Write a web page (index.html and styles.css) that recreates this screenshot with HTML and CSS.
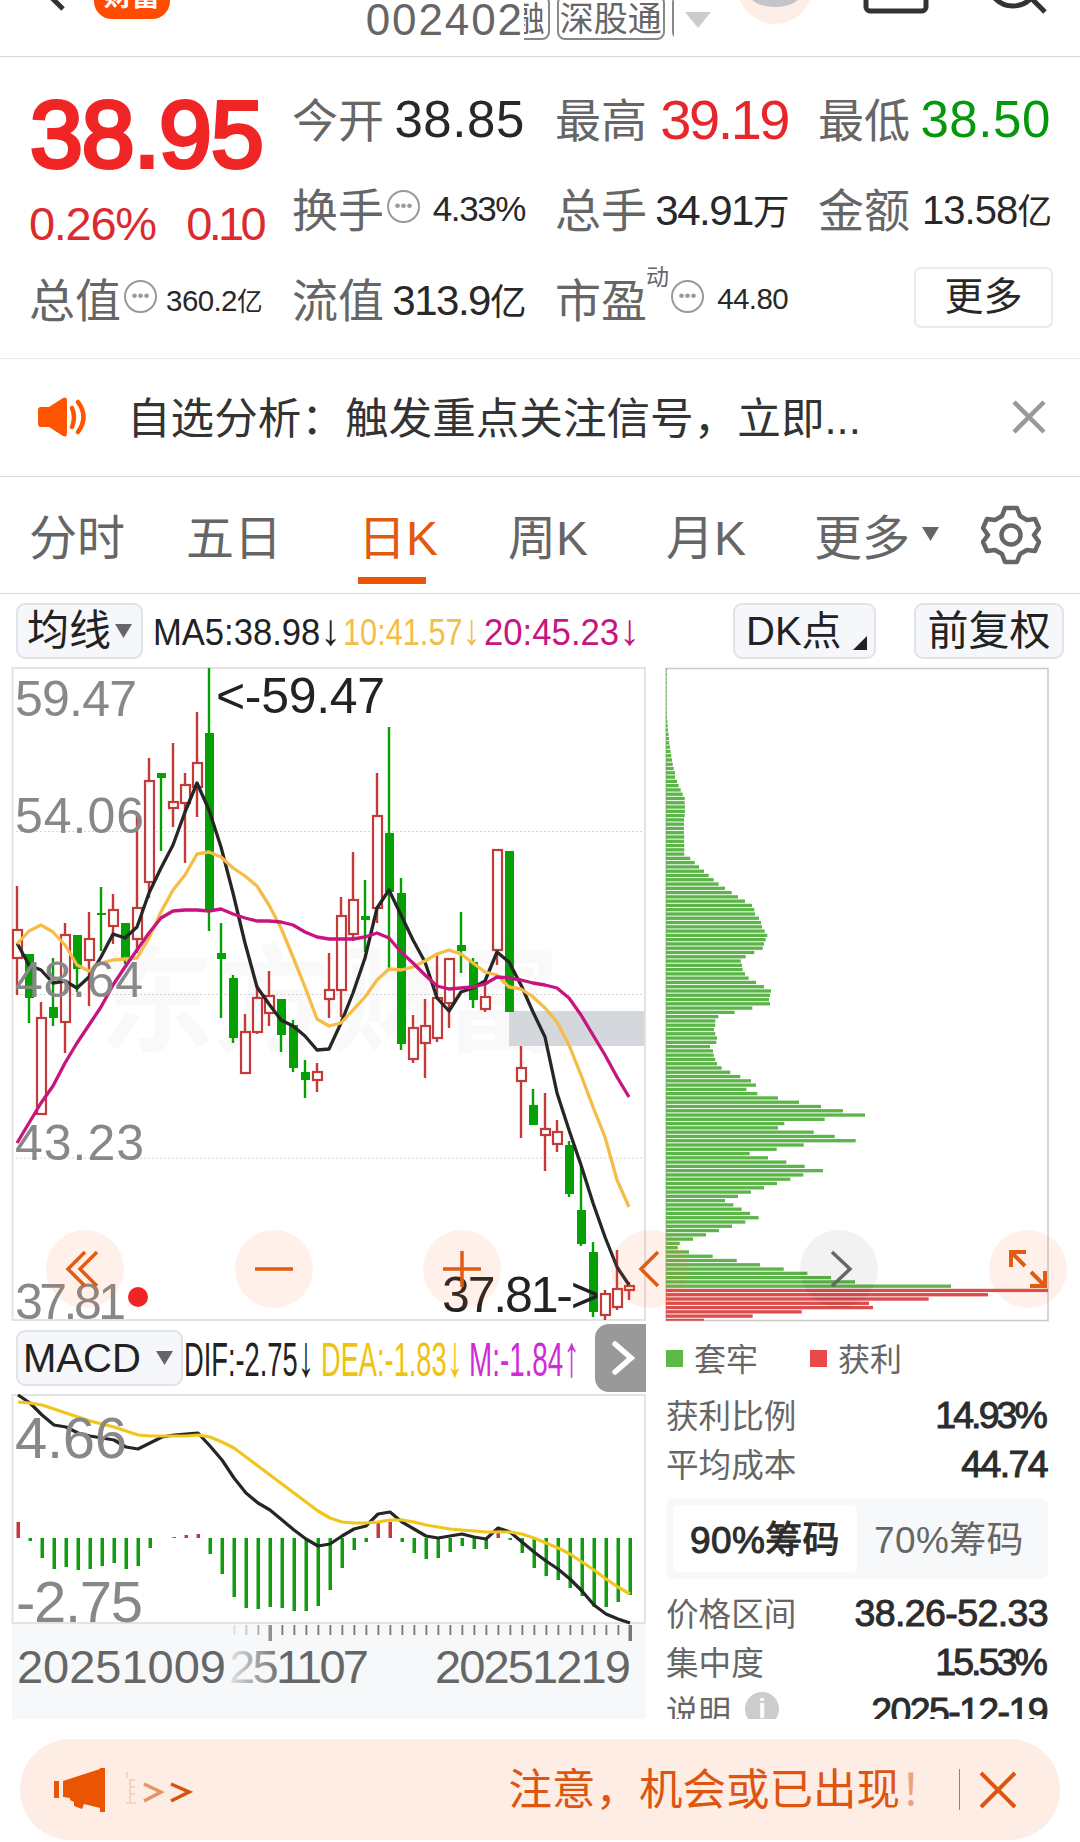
FILE: index.html
```html
<!DOCTYPE html>
<html lang="zh-CN">
<head>
  <meta charset="UTF-8">
  <title>002402</title>
  <link rel="stylesheet" href="styles.css">
</head>
<body>
  <header class="topbar">
    <svg class="back" width="94" height="20" viewBox="0 0 94 20"><path d="M48 -6L63 9" stroke="#333" stroke-width="5" fill="none"/></svg>
    <div class="logo">财富</div>
    <div class="code">002402</div>
    <div class="tags">
      <span class="tag tag-cut">融</span>
      <span class="tag">深股通</span>
      <span class="tag tag-next"></span>
    </div>
    <svg class="caret" width="26" height="16" viewBox="0 0 26 16"><path d="M0 0H26L13 16Z" fill="#ccc"/></svg>
    <svg class="top-icons" width="369" height="30" viewBox="711 0 369 30">
      <circle cx="775" cy="-14" r="38" fill="#ffeee6"/>
      <ellipse cx="775" cy="-5" rx="25" ry="12" fill="#c4c4c9"/>
      <rect x="866" y="-30" width="60" height="41" rx="4" fill="none" stroke="#333" stroke-width="5"/>
      <circle cx="1013" cy="-19" r="25" fill="none" stroke="#333" stroke-width="5"/>
      <path d="M1030 -3L1045 12" stroke="#333" stroke-width="5"/>
    </svg>
  </header>

  <section class="quote">
    <div class="price-block">
      <div class="price">38.95</div>
      <div class="change"><span>0.26%</span><span class="diff">0.10</span></div>
    </div>
    <div class="cell"><label>今开</label><b>38.85</b></div>
    <div class="cell"><label>最高</label><b class="up">39.19</b></div>
    <div class="cell"><label>最低</label><b class="down">38.50</b></div>
    <div class="cell"><label>换手</label><i class="dots">•••</i><b class="s35">4.33%</b></div>
    <div class="cell"><label>总手</label><b class="s41">34.91<em>万</em></b></div>
    <div class="cell"><label>金额</label><b class="s39">13.58<em>亿</em></b></div>
    <div class="cell"><label>总值</label><i class="dots">•••</i><b class="s29">360.2<em>亿</em></b></div>
    <div class="cell"><label>流值</label><b class="s41">313.9<em>亿</em></b></div>
    <div class="cell"><label>市盈</label><sup>动</sup><i class="dots">•••</i><b class="s29 last">44.80</b></div>
    <div class="cell"><button class="more">更多</button></div>
  </section>

  <section class="notice">
    <svg class="speaker" width="52" height="42" viewBox="0 0 52 42">
      <path d="M4 11H12L26 2Q30 0 30 5V37Q30 42 26 40L12 31H4Q1 31 1 28V14Q1 11 4 11Z" fill="#ff5400"/>
      <path d="M35 12Q39 21 35 31M41 6Q52 21 41 36" stroke="#ff5400" stroke-width="4.500" fill="none" stroke-linecap="round"/>
    </svg>
    <div class="notice-text">自选分析：触发重点关注信号，立即...</div>
    <svg class="close" width="34" height="34" viewBox="0 0 34 34"><path d="M2 2L32 32M32 2L2 32" stroke="#999" stroke-width="4.500"/></svg>
  </section>

  <nav class="tabs">
    <span>分时</span>
    <span>五日</span>
    <span class="active">日K</span>
    <span>周K</span>
    <span>月K</span>
    <span>更多<svg class="tri" width="17" height="14" viewBox="0 0 17 14"><path d="M0 0H17L8.500 14Z" fill="#666"/></svg></span>
    <svg class="gear" width="60" height="60" viewBox="-30 -30 60 60">
      <path fill="none" stroke="#666" stroke-width="4.500" stroke-linejoin="round" d="M-6 -27H6L9 -19L16 -15L24 -16L28 -7L23 0L28 7L24 16L16 15L9 19L6 27H-6L-9 19L-16 15L-24 16L-28 7L-23 0L-28 -7L-24 -16L-16 -15L-9 -19Z"/>
      <circle r="9.500" fill="none" stroke="#666" stroke-width="4.500"/>
    </svg>
  </nav>

  <div class="toolbar">
    <button class="pill pill-ma">均线<svg width="17" height="14" viewBox="0 0 17 14"><path d="M0 0H17L8.500 14Z" fill="#666"/></svg></button>
    <svg class="ma-values" width="500" height="60" viewBox="146 601 500 60">
      <g font-size="36.500">
        <text x="153" y="645" textLength="188" lengthAdjust="spacingAndGlyphs" fill="#222">MA5:38.98<tspan class="arrow">↓</tspan></text>
        <text x="343" y="645" textLength="138" lengthAdjust="spacingAndGlyphs" fill="#f5bd48">10:41.57<tspan class="arrow">↓</tspan></text>
        <text x="484" y="645" textLength="156" lengthAdjust="spacingAndGlyphs" fill="#c7147f">20:45.23<tspan class="arrow">↓</tspan></text>
      </g>
    </svg>
    <button class="pill pill-dk">DK点<svg width="14" height="14" viewBox="0 0 14 14"><path d="M14 0V14H0Z" fill="#222"/></svg></button>
    <button class="pill pill-fq">前复权</button>
  </div>

  <main class="stage">
    <div class="left">
      <svg id="kline" width="660" height="656" viewBox="0 666 660 656">
        <text class="watermark" x="98" y="1042" textLength="462">东方财富</text>
        <rect x="509" y="1011" width="136" height="35" fill="#d4d7dc"/>
        <path d="M12 831.500H645M12 994.500H645M12 1158H645" stroke="#d5d5d5" stroke-width="1" stroke-dasharray="2 2"/>
        <rect x="12.500" y="668" width="632.500" height="652" fill="none" stroke="#e3e3e3" stroke-width="2"/>
        <g id="candles"></g>
        <g id="maLines"></g>
        <g class="axis" font-size="50">
          <text x="15" y="716" textLength="122">59.47</text>
          <text x="15" y="833" textLength="129">54.06</text>
          <text x="15" y="997" textLength="128">48.64</text>
          <text x="15" y="1160" textLength="129">43.23</text>
          <text x="15" y="1319" textLength="111">37.81</text>
        </g>
        <circle cx="138" cy="1297" r="10" fill="#f12424"/>
        <text x="216" y="713" font-size="50" textLength="169" fill="#222">&lt;-59.47</text>
        <text x="442" y="1312" font-size="50" textLength="158" fill="#222">37.81-&gt;</text>
      </svg>

      <div class="macd-head">
        <button class="pill pill-macd">MACD<svg width="17" height="14" viewBox="0 0 17 14"><path d="M0 0H17L8.500 14Z" fill="#666"/></svg></button>
        <svg class="macd-values" width="413" height="60" viewBox="182 1328 413 60">
          <g font-size="49">
            <text x="184" y="1376" textLength="130" lengthAdjust="spacingAndGlyphs" fill="#222">DIF:-2.75<tspan class="arrow">↓</tspan></text>
            <text x="321" y="1376" textLength="142" lengthAdjust="spacingAndGlyphs" fill="#f0c20f">DEA:-1.83<tspan class="arrow">↓</tspan></text>
            <text x="469" y="1376" textLength="111" lengthAdjust="spacingAndGlyphs" fill="#cf2bd6">M:-1.84<tspan class="arrow">↑</tspan></text>
          </g>
        </svg>
        <button class="next"><svg width="24" height="34" viewBox="0 0 24 34"><path d="M4 3L20 17L4 31" stroke="#fff" stroke-width="5.500" fill="none" stroke-linecap="round"/></svg></button>
      </div>

      <svg id="macd" width="660" height="325" viewBox="0 1394 660 325">
        <defs>
          <linearGradient id="fade" gradientUnits="userSpaceOnUse" x1="226" y1="0" x2="284" y2="0">
            <stop offset="0" stop-color="#666" stop-opacity=".1"/>
            <stop offset="1" stop-color="#666"/>
          </linearGradient>
        </defs>
        <rect x="12" y="1624" width="634" height="95" fill="#f7f8fa"/>
        <rect x="12.500" y="1395" width="632.500" height="228" fill="none" stroke="#e3e3e3" stroke-width="2"/>
        <g id="macdBars"></g>
        <g id="macdLines"></g>
        <g id="ticks"></g>
        <g class="axis" font-size="58">
          <text x="15" y="1458" textLength="112">4.66</text>
          <text x="16" y="1622" textLength="127">-2.75</text>
        </g>
        <g font-size="47" fill="#666">
          <text x="17" y="1683" textLength="209">20251009</text>
          <text x="229" y="1683" textLength="140" fill="url(#fade)">251107</text>
          <text x="435" y="1683" textLength="196">20251219</text>
        </g>
      </svg>
    </div>

    <div class="right">
      <svg id="chips" width="420" height="656" viewBox="660 666 420 656">
        <rect x="666" y="668.500" width="382" height="652" fill="none" stroke="#c9c9c9" stroke-width="1.500"/>
        <g id="chipBars"></g>
      </svg>
      <div class="info">
        <div class="legend">
          <span class="sq green"></span><span class="legend-a">套牢</span>
          <span class="sq red"></span><span class="legend-b">获利</span>
        </div>
        <div class="row"><span>获利比例</span><b class="tight">14.93%</b></div>
        <div class="row"><span>平均成本</span><b>44.74</b></div>
        <div class="seg"><span class="on">90%筹码</span><span>70%筹码</span></div>
        <div class="row"><span>价格区间</span><b class="wide">38.26-52.33</b></div>
        <div class="row"><span>集中度</span><b class="tight">15.53%</b></div>
        <div class="row"><span>说明<i class="info-dot">i</i></span><b>2025-12-19</b></div>
      </div>
    </div>

    <!-- floating chart controls -->
    <svg class="controls" width="1080" height="90" viewBox="0 1224 1080 90">
      <g fill="rgba(255,104,40,.1)">
        <circle cx="85" cy="1269" r="39"/>
        <circle cx="274" cy="1269" r="39"/>
        <circle cx="462" cy="1269" r="39"/>
        <circle cx="650" cy="1269" r="39"/>
        <circle cx="1028" cy="1269" r="39"/>
      </g>
      <circle cx="839" cy="1269" r="39" fill="rgba(0,0,0,.05)"/>
      <g fill="none" stroke="#e35a12" stroke-width="3.500">
        <path d="M85 1252L68 1269L85 1286M97 1252L80 1269L97 1286"/>
        <path d="M255 1269H293M443 1269H481M462 1251V1287"/>
        <path d="M658 1252L641 1269L658 1286"/>
        <path d="M1026 1252H1011V1267M1011 1252L1025 1266M1030 1286H1045V1271M1045 1286L1031 1272" stroke-width="4"/>
      </g>
      <path d="M832 1252L850 1269L832 1286" fill="none" stroke="#666" stroke-width="3.500"/>
    </svg>
  </main>

  <footer class="banner">
    <svg class="horn" width="52" height="46" viewBox="54 1767 52 46">
      <path d="M54 1781H59V1798H54ZM63 1781L100 1769V1768H105V1812H100V1808L84 1804L82 1809L74 1806V1802L70 1800V1798L63 1797Z" fill="#ea5504"/>
    </svg>
    <svg class="arrows" width="68" height="36" viewBox="124 1770 68 36">
      <path d="M126 1770V1776M129 1777V1801M129 1778H134M129 1785H134M129 1792H134M125 1801H135" stroke="#f7d3c0" stroke-width="2"/>
      <path d="M143 1782L160 1790L143 1799" fill="none" stroke="#e79468" stroke-width="3.500"/>
      <path d="M170 1782L188 1790L170 1799" fill="none" stroke="#d9530f" stroke-width="3.500"/>
    </svg>
    <div class="banner-text">注意，机会或已出现<span>！</span></div>
    <div class="sep"></div>
    <svg class="banner-close" width="38" height="38" viewBox="0 0 38 38"><path d="M2 2L36 36M36 2L2 36" stroke="#dd5510" stroke-width="4"/></svg>
  </footer>

  <script>
    const RED = '#c43a38';
    const GREEN = '#04a004';

    // [up?, high, body top, body bottom, low] in chart pixels
    const candles = [
      [1,886,930,958,995],[0,954,954,998,1023],[1,1002,1018,1114,1114],[0,958,1007,1018,1026],
      [1,923,935,1022,1053],[0,935,935,969,992],[1,912,939,960,1006],[0,887,913,915,951],
      [1,894,910,926,944],[0,923,923,958,964],[1,813,908,939,953],[1,758,781,882,898],
      [0,773,773,778,851],[1,743,802,808,827],[1,773,785,803,863],[1,712,763,787,817],
      [0,668,733,912,931],[0,923,953,959,1018],[0,975,978,1038,1043],[1,1014,1032,1073,1073],
      [1,985,998,1032,1034],[1,971,996,1013,1026],[0,999,999,1035,1052],[0,1020,1025,1068,1072],
      [0,1060,1072,1080,1098],[1,1063,1072,1080,1092],[1,953,990,999,1018],[1,897,916,990,1017],
      [1,852,900,934,941],[0,880,916,920,952],[1,773,816,908,923],[0,727,833,892,968],
      [0,878,893,1044,1050],[1,1015,1028,1059,1063],[1,999,1026,1043,1078],[1,954,998,1038,1042],
      [1,958,959,1003,1028],[0,912,945,951,973],[0,958,962,1000,1008],[1,982,997,1009,1012],
      [1,850,850,950,965],[0,851,851,1012,1012],[1,1046,1068,1081,1138],[0,1089,1105,1125,1125],
      [1,1093,1129,1135,1171],[1,1120,1132,1144,1152],[0,1141,1145,1194,1197],[0,1167,1210,1244,1246],
      [0,1242,1252,1312,1317],[1,1290,1294,1315,1320],[1,1250,1289,1307,1310],[1,1282,1286,1290,1300]
    ];
    const ma20 = [1143,1123,1103,1086,1063,1043,1025,1007,985,967,950,933,918,911,910,910,911,909,914,918,921,921,922,925,932,937,939,939,939,937,933,938,952,963,975,986,989,988,987,984,977,978,980,983,985,988,998,1015,1035,1055,1077,1097];
    const ma10 = [944,931,925,932,945,965,971,963,960,959,958,938,912,890,875,854,852,857,868,876,886,905,928,957,987,1019,1026,1023,1010,997,980,969,970,967,961,954,950,954,963,972,975,987,989,997,1008,1022,1045,1075,1107,1137,1180,1207];
    const ma5 = [943,965,970,983,981,988,977,957,934,938,927,893,868,845,812,783,810,847,893,943,987,1004,1020,1026,1036,1050,1049,1023,993,958,908,890,915,940,962,998,1011,992,988,981,952,962,985,1012,1037,1093,1130,1165,1203,1237,1267,1285];

    // MACD histogram, negative is below the zero line
    const hist = [16,-3,-20,-31,-29,-32,-31,-28,-25,-31,-28,-10,0,1,3,4,-16,-36,-59,-70,-71,-69,-70,-73,-73,-68,-52,-30,-12,-4,15,16,-4,-15,-21,-20,-14,-8,-11,-11,8,-2,-15,-30,-38,-42,-50,-58,-69,-69,-64,-57];
    const dif = [1395,1403,1415,1425,1427,1433,1436,1438,1440,1447,1449,1443,1437,1435,1434,1433,1446,1460,1478,1493,1503,1510,1520,1530,1539,1546,1544,1536,1529,1526,1514,1512,1522,1529,1536,1538,1536,1534,1537,1539,1528,1532,1542,1552,1561,1569,1579,1591,1605,1614,1619,1623];
    const dea = [1402,1403,1405,1409,1413,1417,1421,1424,1427,1431,1435,1436,1436,1436,1436,1435,1437,1442,1448,1457,1466,1475,1484,1493,1502,1511,1518,1522,1523,1523,1522,1520,1520,1522,1525,1527,1529,1530,1531,1532,1532,1532,1534,1538,1543,1548,1554,1562,1570,1579,1587,1594];

    // chip distribution, bar lengths from top to bottom
    const trapped = [.7,.7,.7,.7,.7,.7,.7,.7,.7,.7,.8,1,1.3,1.7,2,2.6,3,3.3,4,4.6,5.3,6,6.7,7.6,9,9,11,12.7,14.7,16.7,18.7,18.7,19,19,18.7,18,18,18,18,18.3,18,18.3,18.3,18.3,24.3,28.7,33,38,42.7,47.7,52.7,59,65.7,72,79,86,88.3,89,93,95,96,98.7,101.3,99.7,98,96.7,88.3,79.7,74.7,76,76.7,79,82.7,90,98,
      105,104,103,104,86.3,68.7,52.3,49.3,49.3,48,49.3,51,50.3,44,47,47.7,49.3,51,55.7,64.3,74.3,85,90,80.3,91.3,112,133,155,177,199,158.7,118.3,112,147.7,168.7,189.7,137.7,110.7,83.7,102,120.3,138.7,157,137.3,124.3,111,98,85,72,59,67.3,75.7,84,92.7,79.3,66,53,40,27,13.7,11.7,23,46.7,70.7,94,117.7,141.3,165,189,285];
    const profit = [382,322,262.7,203,207,135.7,86.7,38];

    function line(data, x0, color, width) {
      const pts = data.map((y, i) => (x0 + i * 12) + ',' + y).join(' ');
      return `<polyline points="${pts}" fill="none" stroke="${color}" stroke-width="${width}" stroke-linejoin="round"/>`;
    }

    document.getElementById('candles').innerHTML = candles.map(([up, high, top, bottom, low], i) => {
      const x = 17 + i * 12;
      if (up) {
        return `<path d="M${x} ${high}V${top}M${x} ${bottom}V${low}" stroke="${RED}" stroke-width="2.4"/>` +
          `<rect x="${x - 4}" y="${top}" width="9" height="${bottom - top}" fill="#fff" stroke="${RED}" stroke-width="2.2"/>`;
      }
      return `<path d="M${x} ${high}V${low}" stroke="${GREEN}" stroke-width="2.4"/>` +
        `<rect x="${x - 4}" y="${top}" width="9" height="${Math.max(bottom - top, 2)}" fill="${GREEN}"/>`;
    }).join('');

    document.getElementById('maLines').innerHTML =
      line(ma5, 17, '#262626', 3.3) + line(ma10, 17, '#f5bd48', 3.3) + line(ma20, 17, '#c7147f', 3.3);

    document.getElementById('macdBars').innerHTML = hist.map((v, i) =>
      `<rect x="${16.5 + i * 12}" y="${v > 0 ? 1538 - v : 1538}" width="3.5" height="${Math.abs(v)}" fill="${v > 0 ? RED : '#129c12'}"/>`
    ).join('');

    document.getElementById('macdLines').innerHTML =
      line(dif, 18, '#262626', 3.2) + line(dea, 18, '#f0c61c', 3.2);

    let ticks = '';
    for (let i = 18; i < 52; i++) {
      const big = i === 21 || i === 51;
      const opacity = Math.min(1, (i - 17) * 0.2);
      ticks += `<rect x="${17.5 + i * 12 - (big ? 1 : 0)}" y="1625" width="${big ? 3.5 : 1.8}" height="${big ? 16 : 10}" fill="#777" opacity="${opacity}"/>`;
    }
    document.getElementById('ticks').innerHTML = ticks;

    const step = 4.278;
    const firstRed = 1288.8;
    document.getElementById('chipBars').innerHTML =
      trapped.map((w, i) => `<rect x="666" y="${(firstRed - (trapped.length - i) * step).toFixed(2)}" width="${w}" height="3.3" fill="#5cb548"/>`).join('') +
      profit.map((w, i) => `<rect x="666" y="${(firstRed + i * step).toFixed(2)}" width="${w}" height="${i === 7 ? 2 : 3.3}" fill="#dd4b4b"/>`).join('');
  </script>
</body>
</html>
```

FILE: styles.css
```css
* {
  box-sizing: border-box;
}

body {
  margin: 0;
  width: 1080px;
  height: 1842px;
  overflow: hidden;
  background-color: #fff;
  color: #666;
  font-family: "Liberation Sans", "Noto Sans CJK SC", sans-serif;
}

svg {
  display: block;
  flex: none;
}

svg text {
  font-family: "Liberation Sans", "Noto Sans CJK SC", sans-serif;
}

button {
  font-family: inherit;
  padding: 0;
  margin: 0;
}

b, em, i {
  font-weight: normal;
  font-style: normal;
}

/* top bar */
.topbar {
  display: flex;
  align-items: flex-start;
  height: 57px;
  border-bottom: 1px solid #d8d8d8;
  overflow: hidden;
}

.logo {
  width: 76px;
  height: 72px;
  margin-top: -53px;
  padding-top: 34px;
  border-radius: 18px;
  background-color: #ff4a00;
  color: #fff;
  font-size: 28px;
  line-height: 32px;
  font-weight: bold;
  text-align: center;
}

.code {
  margin-left: 196px;
  margin-top: -4px;
  width: 158px;
  font-size: 44px;
  line-height: 48px;
  letter-spacing: 1.9px;
}

.tags {
  display: flex;
  width: 151px;
  height: 40px;
  overflow: hidden;
}

.tag {
  flex: none;
  width: 108px;
  height: 45px;
  margin-top: -5px;
  border: 2px solid #888;
  border-radius: 8px;
  font-size: 34px;
  line-height: 45px;
  text-align: center;
}

.tag-cut {
  width: 44px;
  margin-left: -18px;
  margin-right: 7px;
}

.tag-next {
  margin-left: 7px;
}

.caret {
  margin: 12px 0 0 11px;
}

/* quote */
.quote {
  display: grid;
  grid-template-columns: repeat(4, 233px);
  grid-template-rows: repeat(3, 90px);
  column-gap: 30px;
  height: 302px;
  padding: 17px 29px 0;
  border-bottom: 1px solid #ececec;
}

.price-block {
  grid-row: span 2;
  color: #f02525;
}

.price {
  height: 120px;
  padding-left: 1px;
  line-height: 121px;
  font-size: 95px;
  letter-spacing: -1px;
  white-space: nowrap;
  -webkit-text-stroke: 4px #f02525;
}

.change {
  display: flex;
  justify-content: space-between;
  height: 60px;
  line-height: 60px;
  font-size: 47px;
  letter-spacing: -1.3px;
  color: #dd2a2e;
}

.diff {
  letter-spacing: -3.7px;
  margin-right: -1px;
}

.cell {
  display: flex;
  align-items: center;
  white-space: nowrap;
}

.cell label {
  padding-bottom: 5px;
  font-size: 46px;
}

.cell b {
  margin-left: auto;
  color: #282828;
  font-size: 51px;
  letter-spacing: 0.6px;
}

.cell .up {
  color: #e8262a;
  font-size: 56px;
  letter-spacing: -2.5px;
}

.cell .down {
  color: #04980a;
}

.cell .s41 {
  font-size: 42px;
  letter-spacing: -1.5px;
}

.cell .s39 {
  font-size: 40px;
  letter-spacing: -1px;
}

.cell .s35 {
  font-size: 35px;
  letter-spacing: -1.4px;
}

.cell .s29 {
  font-size: 29.5px;
  letter-spacing: -0.6px;
}

.cell em {
  font-size: 0.87em;
}

.dots {
  width: 33px;
  height: 33px;
  margin: -6px 0 0 3px;
  border: 2.5px solid #999;
  border-radius: 50%;
  color: #999;
  font-size: 17px;
  line-height: 27px;
  text-align: center;
}

.cell sup {
  font-size: 23px;
  margin: -48px -1px 0 -1px;
}

.more {
  width: 139px;
  height: 61px;
  margin: -4px -2px 0 auto;
  border: 2px solid #e8eaec;
  border-radius: 7px;
  background-color: #fff;
  color: #282828;
  font-size: 39px;
  line-height: 56px;
}

/* notice */
.notice {
  display: flex;
  align-items: center;
  height: 118px;
  padding: 0 34px 2px 37px;
  border-bottom: 1px solid #d8d8d8;
}

.notice-text {
  flex: 1;
  padding: 0 0 4px 38px;
  color: #333;
  font-size: 43.6px;
  white-space: nowrap;
}

/* period tabs */
.tabs {
  display: grid;
  grid-template-columns: 157px 172px 150px 158px 148px 167px 60px;
  align-items: center;
  height: 117px;
  padding-left: 29px;
  border-bottom: 1px solid #d8d8d8;
  font-size: 48px;
}

.tabs span {
  display: flex;
  align-items: center;
  height: 116px;
  padding-bottom: 2px;
  white-space: nowrap;
}

.tabs .tri {
  margin-left: 12px;
}

.tabs .active {
  background: linear-gradient(#ea5504, #ea5504) 0 100px / 68px 7px no-repeat;
  color: #e05a10;
}

/* indicator toolbar */
.toolbar {
  display: flex;
  align-items: center;
  height: 72px;
  padding: 2px 16px 0;
}

.pill {
  display: flex;
  align-items: center;
  flex: none;
  height: 56px;
  border: 2px solid #e0e3e7;
  border-radius: 9px;
  background-color: #f6f7fa;
  color: #222;
  font-size: 42px;
  line-height: 50px;
  white-space: nowrap;
}

.pill-ma {
  width: 127px;
  padding-left: 9px;
}

.pill-ma svg {
  margin-left: 4px;
}

.ma-values {
  margin-left: 3px;
}

.pill-dk {
  width: 143px;
  margin-left: 87px;
  padding-left: 11px;
  font-size: 40px;
}

.pill-dk svg {
  margin: 24px 0 0 11px;
}

.pill-fq {
  width: 150px;
  margin-left: auto;
  justify-content: center;
  font-size: 41px;
}

/* charts */
.stage {
  position: relative;
  display: flex;
  height: 1053px;
  overflow: hidden;
}

.controls {
  position: absolute;
  left: 0;
  top: 558px;
}

.arrow {
  font-size: 1.2em;
}

.axis {
  fill: #888;
}

.watermark {
  font-size: 116px;
  font-weight: bold;
  fill: #f9f9f9;
}

.macd-head {
  display: flex;
  align-items: center;
  height: 72px;
  padding-left: 16px;
}

.pill-macd {
  width: 167px;
  padding-left: 5px;
  font-size: 40px;
}

.pill-macd svg {
  margin-left: 15px;
}

.macd-values {
  margin-left: -1px;
}

.next {
  display: flex;
  align-items: center;
  width: 51px;
  height: 68px;
  padding-left: 16px;
  border: none;
  border-radius: 14px 0 0 14px;
  background-color: #999;
}

/* chip info */
.info {
  width: 388px;
  padding-left: 6px;
}

.legend {
  display: flex;
  align-items: center;
  height: 68px;
  padding-top: 4px;
  font-size: 32px;
}

.legend-a, .legend-b {
  padding-bottom: 3px;
}

.sq {
  width: 17px;
  height: 17px;
  margin-right: 11px;
}

.green {
  background-color: #5cb947;
}

.red {
  background-color: #e84a4a;
}

.legend-a {
  margin-right: 52px;
}

.row {
  display: flex;
  align-items: center;
  justify-content: space-between;
  height: 49px;
  font-size: 32.6px;
  white-space: nowrap;
}

.row span {
  display: flex;
  align-items: center;
  padding-bottom: 3px;
}

.row b {
  margin-right: 1px;
  padding-top: 2px;
  color: #2c2c2c;
  font-size: 37.5px;
  letter-spacing: -1.6px;
  -webkit-text-stroke: 1px #2c2c2c;
}

.row .tight {
  margin-right: 3px;
  letter-spacing: -2.9px;
}

.row .wide {
  margin-right: 0;
  letter-spacing: -0.6px;
}

.seg {
  display: flex;
  height: 81px;
  margin: 10px 0 9px;
  padding: 7px;
  border-radius: 7px;
  background-color: #f7f8fa;
  font-size: 37px;
  letter-spacing: 0.4px;
}

.seg span {
  flex: 1;
  display: flex;
  align-items: center;
  justify-content: center;
  padding-bottom: 3px;
  border-radius: 6px;
}

.seg .on {
  background-color: #fff;
  color: #2c2c2c;
  -webkit-text-stroke: 1px #2c2c2c;
}

.info-dot {
  width: 34px;
  height: 34px;
  margin-left: 14px;
  border-radius: 50%;
  background-color: #ccc;
  color: #fff;
  font-size: 28px;
  font-weight: bold;
  line-height: 34px;
  text-align: center;
}

/* bottom banner */
.banner {
  display: flex;
  align-items: center;
  height: 101px;
  margin: 20px 20px 0;
  padding: 0 43px 0 34px;
  border-radius: 51px;
  background-color: #fdede4;
}

.arrows {
  margin-left: 19px;
}

.banner-text {
  margin-left: auto;
  color: #dd5510;
  font-size: 43.5px;
  line-height: 60px;
  white-space: nowrap;
}

.banner-text span {
  color: #efa27c;
}

.sep {
  width: 1.5px;
  height: 41px;
  margin: 0 19px 0 15px;
  background-color: #dd6a30;
}
```
